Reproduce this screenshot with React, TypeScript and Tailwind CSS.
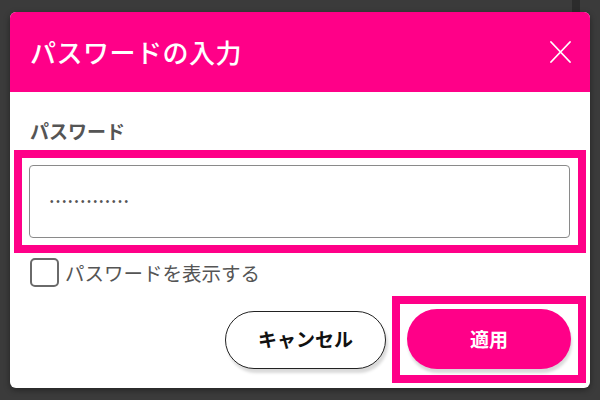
const jp = "font-['Noto_Sans_CJK_JP','Noto_Sans',sans-serif]";

export default function App() {
  return (
    <div className={`relative w-[600px] h-[400px] overflow-hidden bg-[#3b3b3b] pt-[12px] pl-[10px] ${jp}`}>
      {/* scrollbar strip peeking behind the dialog */}
      <div className="absolute top-0 left-[572px] w-[8px] h-[14px] bg-[#2c2c2c]" />

      <div className="relative w-[580px] h-[376px] bg-white rounded-[6px] flex flex-col shadow-[0_2px_6px_rgba(0,0,0,0.4)]">
        {/* header */}
        <div className="h-[80px] shrink-0 bg-[#ff0088] rounded-t-[6px] flex items-center justify-between pl-[20px] pr-[19px]">
          <h1 className="text-[26px] leading-none font-medium text-white tracking-[0.5px]">パスワードの入力</h1>
          <svg width="21" height="22" viewBox="0 0 21 22" fill="none" stroke="white" strokeWidth={1.8} strokeLinecap="round">
            <path d="M1 1L20 21M20 1L1 21" />
          </svg>
        </div>

        {/* body */}
        <div className="flex-1 flex flex-col px-[4px] pb-[5px]">
          <label className="mt-[29px] mb-[9px] ml-[16px] text-[19px] leading-[20px] font-bold text-[#555]">パスワード</label>

          <div className="border-[8px] border-[#ff0088] p-[7px] pr-[8px]">
            <div className="h-[73px] border border-[#8a8a8a] rounded-[4px] flex items-center pl-[20px]">
              <span className="text-[10px] leading-none tracking-[2.7px] text-[#555] font-['Liberation_Sans',sans-serif]">•••••••••••••</span>
            </div>
          </div>

          <div className="mt-[5px] ml-[16px] flex items-center gap-[6px]">
            <div className="w-[29px] h-[29px] rounded-[5px] border-2 border-[#6a6a6a] bg-white" />
            <span className="text-[19.5px] leading-none text-[#555]">パスワードを表示する</span>
          </div>

          <div className="mt-auto flex items-center justify-end gap-[6px]">
            <button className="w-[161px] h-[58px] rounded-full border border-[#222] bg-white text-[19px] font-bold text-[#111] shadow-[2px_4px_3px_rgba(0,0,0,0.15)]">
              キャンセル
            </button>
            <div className="border-[8px] border-[#ff0088] pt-[5px] pb-[6px] px-[7px]">
              <button className="w-[164px] h-[60px] rounded-full bg-[#ff0088] text-[19px] font-bold text-white shadow-[1px_4px_3px_rgba(0,0,0,0.15)]">
                適用
              </button>
            </div>
          </div>
        </div>
      </div>
    </div>
  );
}
